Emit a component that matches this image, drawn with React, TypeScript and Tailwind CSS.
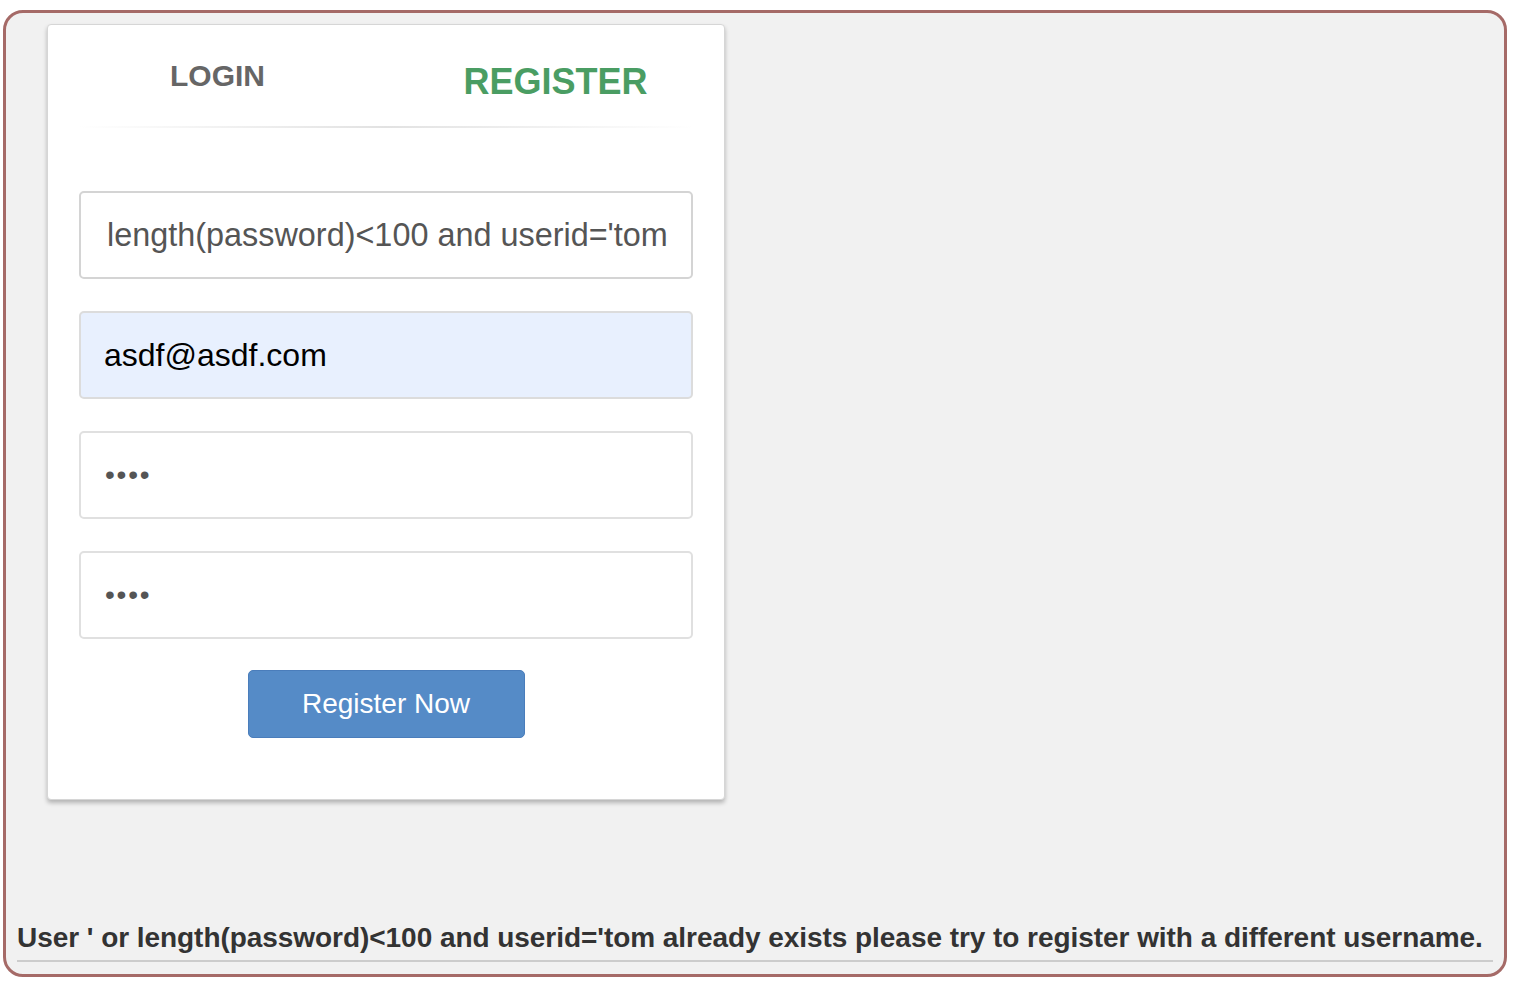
export default function App() {
  return (
    <div className="min-h-screen bg-white pt-[10px] pl-[3px] font-['Liberation_Sans',Arial,sans-serif]">
      <div className="w-[1504px] h-[967px] border-[3px] border-[#a56a67] rounded-[20px] bg-[#f1f1f1] flex flex-col">
        <div className="ml-[41px] mt-[11px] w-[678px] h-[776px] bg-white border border-[#d6d6d6] rounded-[4px] shadow-[0_3px_4px_rgba(0,0,0,0.25)] flex flex-col">
          <div className="flex items-start h-[101px]">
            <div className="w-[340px] pt-[36px] text-center text-[30px] font-bold text-[#666666] leading-none">LOGIN</div>
            <div className="w-[338px] pt-[39px] text-center text-[36px] font-bold text-[#4a9d63] leading-none">REGISTER</div>
          </div>
          <div className="mx-[30px] h-[2px] bg-gradient-to-r from-transparent via-[#e2e2e2] to-transparent" />
          <div className="px-[31px] pt-[63px] flex flex-col gap-[32px]">
            <input
              readOnly
              value="length(password)<100 and userid='tom"
              className="h-[88px] w-full border-2 border-[#d4d4d4] rounded-[5px] bg-white pl-[26px] text-[32.4px] text-[#555555] outline-none"
            />
            <input
              readOnly
              value="asdf@asdf.com"
              className="h-[88px] w-full border-2 border-[#dcdcdc] rounded-[5px] bg-[#e8f0fe] pl-[23px] text-[32px] text-black outline-none"
            />
            <input
              readOnly
              type="password"
              value="asdf"
              className="h-[88px] w-full border-2 border-[#e0e0e0] rounded-[5px] bg-white pl-[24px] text-[28px] text-[#555555] tracking-[1.8px] outline-none"
            />
            <input
              readOnly
              type="password"
              value="asdf"
              className="h-[88px] w-full border-2 border-[#e0e0e0] rounded-[5px] bg-white pl-[24px] text-[28px] text-[#555555] tracking-[1.8px] outline-none"
            />
          </div>
          <div className="flex justify-center pt-[31px]">
            <button className="w-[277px] h-[68px] bg-[#558bc7] border border-[#4a7dbb] rounded-[5px] text-white text-[28px]">
              Register Now
            </button>
          </div>
        </div>
        <div className="mt-auto mx-[11px] mb-[12px]">
          <p className="text-[28px] font-bold text-[#333333] leading-none pb-[8px] whitespace-nowrap tracking-[-0.05px]">
            User ' or length(password)&lt;100 and userid='tom already exists please try to register with a different username.
          </p>
          <div className="h-[2px] bg-[#cccccc]" />
        </div>
      </div>
    </div>
  );
}
